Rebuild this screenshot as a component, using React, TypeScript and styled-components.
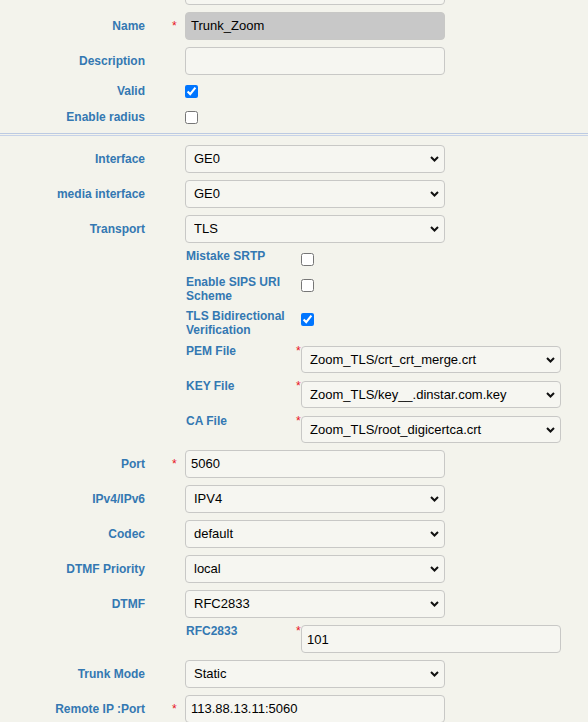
import React from "react";
import styled, { createGlobalStyle } from "styled-components";

const GlobalStyle = createGlobalStyle`
  html, body {
    margin: 0;
    padding: 0;
    background: #f3f3ec;
  }
  body {
    font-family: "Liberation Sans", Arial, sans-serif;
    overflow: hidden;
  }
`;

const Form = styled.div`
  width: 588px;
  margin-top: -27px;
`;

const Row = styled.div<{ $h?: number }>`
  display: grid;
  grid-template-columns: 145px 40px 1fr;
  align-items: center;
  height: ${(p) => (p.$h ? `${p.$h}px` : "auto")};
`;

const Label = styled.div`
  text-align: right;
  font-weight: bold;
  font-size: 12px;
  line-height: 14px;
  color: #3478b2;
  white-space: nowrap;
`;

const StarCell = styled.div`
  padding-left: 27px;
  font-size: 12px;
  line-height: 14px;
  color: #e8141c;
`;

const TextInput = styled.input<{ $bg?: string; $h?: number; $mt?: number }>`
  box-sizing: border-box;
  width: 260px;
  height: ${(p) => p.$h ?? 28}px;
  margin: ${(p) => p.$mt ?? 0}px 0 0;
  padding: 0 5px;
  border: 1px solid #c8c8c6;
  border-radius: 4px;
  background: ${(p) => p.$bg ?? "#f6f6f1"};
  font-family: "Liberation Sans", Arial, sans-serif;
  font-size: 13px;
  color: #000;
  outline: none;
  display: block;
`;

const SelectWrap = styled.div<{ $mt?: number }>`
  position: relative;
  width: 260px;
  margin-top: ${(p) => p.$mt ?? 0}px;
`;

const Select = styled.select<{ $h?: number }>`
  appearance: none;
  -webkit-appearance: none;
  box-sizing: border-box;
  width: 260px;
  height: ${(p) => p.$h ?? 28}px;
  margin: 0;
  padding: 0 24px 0 8px;
  border: 1px solid #c8c8c6;
  border-radius: 4px;
  background: #f6f6f1;
  font-family: "Liberation Sans", Arial, sans-serif;
  font-size: 13px;
  color: #000;
  outline: none;
  display: block;
`;

const Chevron = styled.svg`
  position: absolute;
  right: 6px;
  top: 50%;
  margin-top: -3px;
  pointer-events: none;
`;

const Checkbox = styled.input<{ $sub?: boolean }>`
  width: 13px;
  height: 13px;
  margin: ${(p) => (p.$sub ? "4px 0 3px 5px" : "0")};
  display: block;
`;

const Separator = styled.div`
  height: 1px;
  margin: 3px 0 5px;
  border-top: 1px solid #bccae2;
  border-bottom: 1px solid #c6d2e8;
`;

const SubTable = styled.div`
  grid-column: 3;
  display: flex;
  flex-direction: column;
`;

const SubRow = styled.div<{ $pb?: number }>`
  display: grid;
  grid-template-columns: 111px 1fr;
  align-items: start;
  padding: 3px 0 ${(p) => p.$pb ?? 3}px;
`;

const SubLabel = styled.div`
  padding-left: 1px;
  font-weight: bold;
  font-size: 12px;
  line-height: 14px;
  color: #3478b2;
`;

const SubControl = styled.div`
  display: flex;
  align-items: flex-start;
`;

const SubStar = styled.span`
  width: 5px;
  font-size: 12px;
  line-height: 15px;
  color: #e8141c;
`;

const Spacer = styled.div``;

function Dropdown({ value, h, mt }: { value: string; h?: number; mt?: number }) {
  return (
    <SelectWrap $mt={mt}>
      <Select $h={h} defaultValue={value}>
        <option value={value}>{value}</option>
      </Select>
      <Chevron width="9" height="6" viewBox="0 0 9 6">
        <path d="M1 1 L4.5 4.5 L8 1" fill="none" stroke="#111" strokeWidth="2" />
      </Chevron>
    </SelectWrap>
  );
}

function FieldRow({
  label,
  star,
  children,
  h = 35,
}: {
  label?: string;
  star?: boolean;
  children?: React.ReactNode;
  h?: number;
}) {
  return (
    <Row $h={h}>
      <Label>{label}</Label>
      <StarCell>{star ? "*" : ""}</StarCell>
      <div>{children}</div>
    </Row>
  );
}

function SubCheck({ label, checked, pb }: { label: string; checked?: boolean; pb?: number }) {
  return (
    <SubRow $pb={pb}>
      <SubLabel>{label}</SubLabel>
      <SubControl>
        <Checkbox type="checkbox" $sub defaultChecked={checked} />
      </SubControl>
    </SubRow>
  );
}

function SubSelect({ label, value }: { label: string; value: string }) {
  return (
    <SubRow>
      <SubLabel>{label}</SubLabel>
      <SubControl>
        <SubStar>*</SubStar>
        <Dropdown value={value} h={27} mt={2} />
      </SubControl>
    </SubRow>
  );
}

export default function App() {
  return (
    <>
      <GlobalStyle />
      <Form>
        <FieldRow>
          <TextInput defaultValue="" />
        </FieldRow>
        <FieldRow label="Name" star>
          <TextInput defaultValue="Trunk_Zoom" $bg="#c8c8c8" readOnly />
        </FieldRow>
        <FieldRow label="Description">
          <TextInput defaultValue="" />
        </FieldRow>
        <FieldRow label="Valid" h={26}>
          <Checkbox type="checkbox" defaultChecked />
        </FieldRow>
        <FieldRow label="Enable radius" h={26}>
          <Checkbox type="checkbox" />
        </FieldRow>
        <Separator />
        <FieldRow label="Interface">
          <Dropdown value="GE0" />
        </FieldRow>
        <FieldRow label="media interface">
          <Dropdown value="GE0" />
        </FieldRow>
        <FieldRow label="Transport">
          <Dropdown value="TLS" />
        </FieldRow>
        <Row>
          <Spacer />
          <Spacer />
          <SubTable>
            <SubCheck label="Mistake SRTP" />
            <SubCheck label="Enable SIPS URI Scheme" />
            <SubCheck label="TLS Bidirectional Verification" checked pb={4} />
            <SubSelect label="PEM File" value="Zoom_TLS/crt_crt_merge.crt" />
            <SubSelect label="KEY File" value="Zoom_TLS/key__.dinstar.com.key" />
            <SubSelect label="CA File" value="Zoom_TLS/root_digicertca.crt" />
          </SubTable>
        </Row>
        <FieldRow label="Port" star>
          <TextInput defaultValue="5060" />
        </FieldRow>
        <FieldRow label="IPv4/IPv6">
          <Dropdown value="IPV4" />
        </FieldRow>
        <FieldRow label="Codec">
          <Dropdown value="default" />
        </FieldRow>
        <FieldRow label="DTMF Priority">
          <Dropdown value="local" />
        </FieldRow>
        <FieldRow label="DTMF">
          <Dropdown value="RFC2833" />
        </FieldRow>
        <Row>
          <Spacer />
          <Spacer />
          <SubTable>
            <SubRow>
              <SubLabel>RFC2833</SubLabel>
              <SubControl>
                <SubStar>*</SubStar>
                <TextInput defaultValue="101" $mt={1} />
              </SubControl>
            </SubRow>
          </SubTable>
        </Row>
        <FieldRow label="Trunk Mode">
          <Dropdown value="Static" />
        </FieldRow>
        <FieldRow label="Remote IP :Port" star>
          <TextInput defaultValue="113.88.13.11:5060" />
        </FieldRow>
      </Form>
    </>
  );
}
